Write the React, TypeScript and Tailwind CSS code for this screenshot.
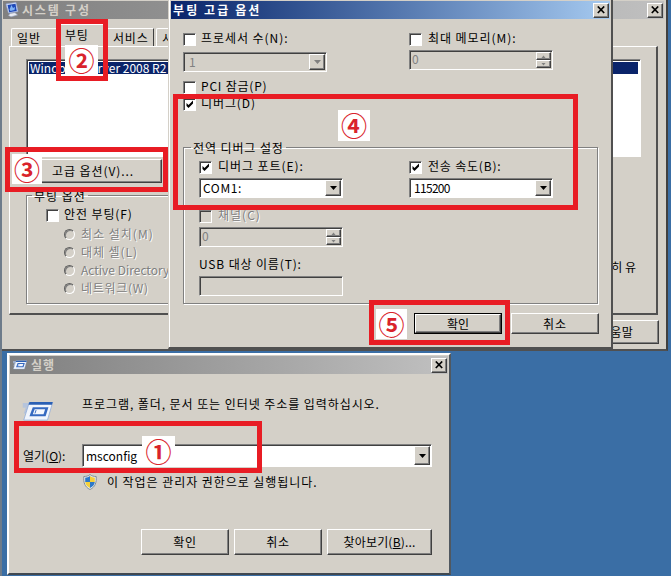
import type { ReactNode } from "react";

const RAISED =
  "bg-[#d4d0c8] border border-t-white border-l-white border-r-[#404040] border-b-[#404040] shadow-[inset_-1px_-1px_0_#808080]";
const SUNKEN =
  "border border-t-[#808080] border-l-[#808080] border-r-white border-b-white shadow-[inset_1px_1px_0_#404040]";
const DISABLED = "text-[#808080] [text-shadow:1px_1px_0_#fff]";

function CloseButton() {
  return (
    <div className={`flex h-[15px] w-4 shrink-0 items-center justify-center ${RAISED}`}>
      <svg width="9" height="8" viewBox="0 0 9 8" className="block">
        <path d="M0.8 0.5L7.2 7M7.2 0.5L0.8 7" stroke="#000" strokeWidth="1.7" />
      </svg>
    </div>
  );
}

function Button({ className, children }: { className: string; children: ReactNode }) {
  return (
    <div className={`flex shrink-0 items-center justify-center whitespace-nowrap ${RAISED} ${className}`}>
      {children}
    </div>
  );
}

function Check({ checked, disabled }: { checked?: boolean; disabled?: boolean }) {
  return (
    <div
      className={`flex h-[13px] w-[13px] shrink-0 items-center justify-center ${SUNKEN} ${
        disabled ? "bg-[#d4d0c8]" : "bg-white"
      }`}
    >
      {checked && (
        <svg width="9" height="9" viewBox="0 0 9 9" className="block">
          <path d="M1.5 3v3l2 2 4.500-4.500v-3L3.500 5z" fill="#000" />
        </svg>
      )}
    </div>
  );
}

function CheckRow({
  checked,
  disabled,
  gap = "gap-[5px]",
  className = "",
  children,
}: {
  checked?: boolean;
  disabled?: boolean;
  gap?: string;
  className?: string;
  children: ReactNode;
}) {
  return (
    <div className={`flex h-[13px] items-center whitespace-nowrap ${gap} ${className}`}>
      <Check checked={checked} disabled={disabled} />
      <span className={`-mt-[3px] ${disabled ? DISABLED : ""}`}>{children}</span>
    </div>
  );
}

function Combo({
  value,
  disabled,
  className,
  textClass = "pl-1",
}: {
  value: string;
  disabled?: boolean;
  className: string;
  textClass?: string;
}) {
  return (
    <div className={`flex p-px ${SUNKEN} ${disabled ? "bg-[#d4d0c8] text-[#808080]" : "bg-white"} ${className}`}>
      <span className={`flex flex-1 items-center ${textClass}`}>{value}</span>
      <div className={`flex w-4 items-center justify-center ${RAISED}`}>
        <svg width="7" height="4" viewBox="0 0 7 4" className="block">
          <path d="M0 0h7L3.5 4z" fill={disabled ? "#808080" : "#000"} />
        </svg>
      </div>
    </div>
  );
}

function Spinner() {
  return (
    <div className={`flex h-5 w-36 bg-[#d4d0c8] p-px text-[#808080] ${SUNKEN}`}>
      <span className="flex-1 pl-px leading-[13px]">0</span>
      <div className="flex w-[15px] flex-col">
        <div className={`flex flex-1 items-center justify-center ${RAISED}`}>
          <svg width="5" height="3" viewBox="0 0 5 3" className="block">
            <path d="M0.5 3h4L2.5 0.5z" fill="#808080" />
          </svg>
        </div>
        <div className={`flex flex-1 items-center justify-center ${RAISED}`}>
          <svg width="5" height="3" viewBox="0 0 5 3" className="block">
            <path d="M0.5 0h4L2.5 2.5z" fill="#808080" />
          </svg>
        </div>
      </div>
    </div>
  );
}

function Radio({ children, className = "" }: { children: ReactNode; className?: string }) {
  return (
    <div className="flex h-[18px] items-center gap-[6px] whitespace-nowrap">
      <div className="h-[11px] w-[11px] shrink-0 rounded-full border border-t-[#606060] border-l-[#606060] border-r-white border-b-white shadow-[inset_1px_1px_0_#808080]" />
      <span className={`-mt-px ${DISABLED} ${className}`}>{children}</span>
    </div>
  );
}

function MonitorIcon() {
  return (
    <svg width="14" height="16" viewBox="0 0 14 16" className="block shrink-0">
      <path d="M1 2l10-1.500 2 9-9.500 1.500z" fill="#dfe6f5" stroke="#8fa5d8" strokeWidth="0.7" />
      <path d="M2.500 3l8-1.200 1.300 7.200-7.600 1.200z" fill="#1d48b8" />
      <path d="M4.500 7.500l2-4.500 1.500 3 2-1-.5 3-4 1z" fill="#7fb2f4" />
      <path d="M5 11.500l5-.8 2.500 2.300-6.500 1.800-2.500-1.300z" fill="#e8ebf2" stroke="#9aa7c4" strokeWidth="0.6" />
    </svg>
  );
}

function RunIcon({ className }: { className: string }) {
  return (
    <svg viewBox="0 0 32 20" className={`block shrink-0 ${className}`}>
      <path d="M0 1h10L6 12H1l2-6H0z" fill="#a9bfe2" opacity="0.7" />
      <path d="M7 0h24.500L26 19H1z" fill="#f1f5fc" stroke="#8eabd9" strokeWidth="0.8" />
      <path d="M7 0h24.500l-.8 3H6z" fill="#2a5fb4" />
      <path d="M10.500 5.500h16.500l-3 9.500H7z" fill="#3569c0" />
      <path d="M12.500 7.500h11l-1.700 5.500H10.500z" fill="#f4f7fd" />
      <path d="M14 8.500l-1.200 3.500" stroke="#3569c0" strokeWidth="1" />
    </svg>
  );
}

function ShieldIcon() {
  return (
    <svg width="14" height="16" viewBox="0 0 14 16" className="block shrink-0">
      <path d="M7 .5C5.500 2 3 2.500.8 2.500.4 8 1.500 13 7 15.500 12.500 13 13.600 8 13.200 2.500 11 2.500 8.500 2 7 .5z" fill="#e8edf0" stroke="#77848f" strokeWidth="0.9" />
      <path d="M7 2C5.500 3.200 4 3.600 2.200 3.700V8H7z" fill="#2d78c8" />
      <path d="M7 2c1.500 1.200 3 1.600 4.800 1.700V8H7z" fill="#f4d03a" />
      <path d="M2.200 8H7v6C4 12.500 2.500 10.500 2.200 8z" fill="#f4d03a" />
      <path d="M11.800 8H7v6c3-1.500 4.500-3.500 4.800-6z" fill="#2d78c8" />
    </svg>
  );
}

function Mark({ box, badge, n }: { box: string; badge: string; n: string }) {
  return (
    <>
      <div className={`absolute border-[5px] border-[#e81c24] ${box}`} />
      <div
        className={`absolute flex items-center justify-center bg-white pb-px text-[26px] leading-none font-bold text-[#d9232b] ${badge}`}
      >
        {n}
      </div>
    </>
  );
}

function ConfigWindow() {
  return (
    <div className="absolute top-0 left-0 flex h-[351px] w-[668px] flex-col border-r-2 border-b-2 border-l-2 border-r-[#404040] border-b-[#505050] border-l-[#808080] bg-[#d4d0c8] pt-px pr-[2px] pl-px">
      <div className="flex h-[18px] shrink-0 items-center bg-linear-to-r from-[#808080] to-[#c0c0c0] pr-px pl-[2px]">
        <MonitorIcon />
        <span className="ml-[3px] flex-1 text-[12px] font-bold tracking-[1.8px] text-[#d4d0c8]">시스템 구성</span>
        <CloseButton />
      </div>
      <div className="ml-2 flex h-[27px] shrink-0 items-end">
        <div className="flex h-[18px] w-[46px] items-center rounded-tl-[2px] border-t border-l border-white pl-[5px] tracking-[1px]">
          일반
        </div>
        <div className="flex h-[22px] w-[51px] items-start border-t border-l border-white pt-[3px] pl-[7px] tracking-[0.6px]">
          부팅
        </div>
        <div className="flex h-[18px] w-[46px] items-center border-t border-r border-t-white border-r-[#404040] pl-[5px] tracking-[0.8px]">
          서비스
        </div>
        <div className="ml-[2px] flex h-[18px] w-20 items-center rounded-tl-[2px] border-t border-l border-white pl-[5px]">
          시작
        </div>
      </div>
      <div className="ml-[6px] flex h-[269px] w-[649px] shrink-0 flex-col border border-t-white border-r-2 border-b-2 border-l-white border-r-[#505050] border-b-[#505050] pt-[12px] pl-4">
        <div className={`h-[98px] w-[615px] shrink-0 bg-white p-[2px] ${SUNKEN}`}>
          <div className="flex h-3 items-center bg-[#0a246a] pl-px whitespace-nowrap text-white">
            Windows Server 2008 R2
          </div>
        </div>
        <Button className="mt-[2px] ml-[14px] h-6 w-[122px] pr-[16px] tracking-[0.9px]">고급 옵션(V)...</Button>
        <div className="flex">
          <fieldset className="mt-[5px] h-[116px] w-[560px] shrink-0 border border-[#808080] pl-[19px] shadow-[1px_1px_0_#fff,inset_1px_1px_0_#fff]">
            <legend className="-ml-[14px] px-[2px] leading-[15px] tracking-[1px]">부팅 옵션</legend>
            <CheckRow className="mt-[6px] tracking-[0.9px]">안전 부팅(F)</CheckRow>
            <div className="mt-[3px] ml-[18px] flex flex-col">
              <Radio className="tracking-[1px]">최소 설치(M)</Radio>
              <Radio className="tracking-[0.95px]">대체 셸(L)</Radio>
              <Radio>Active Directory 복구(E)</Radio>
              <Radio className="tracking-[0.7px]">네트워크(W)</Radio>
            </div>
          </fieldset>
          <div className="mt-[77px] w-[50px] text-right whitespace-nowrap">히 유</div>
        </div>
      </div>
      <Button className="mt-[5px] mr-[5px] ml-auto h-[24px] w-[86px] tracking-[0.6px]">도움말</Button>
    </div>
  );
}

function AdvancedDialog() {
  return (
    <div className="absolute top-0 left-[168px] flex h-[349px] w-[445px] flex-col border-r-2 border-b-2 border-l border-r-[#505050] border-b-[#505050] border-l-[#d4d0c8] bg-[#d4d0c8] pt-px pr-px shadow-[inset_1px_0_0_#fff]">
      <div className="ml-[2px] flex h-[18px] shrink-0 items-center bg-linear-to-r from-[#0a246a] to-[#a6caf0] pr-px pl-[2px]">
        <span className="flex-1 text-[12px] font-bold tracking-[2.1px] text-white">부팅 고급 옵션</span>
        <CloseButton />
      </div>
      <div className="ml-[14px] flex h-[62px] shrink-0 gap-[82px] pt-[14px]">
        <div className="w-36">
          <CheckRow className="tracking-[0.95px]">프로세서 수(N):</CheckRow>
          <Combo value="1" disabled className="mt-[6px] h-5 w-36" />
        </div>
        <div className="w-36">
          <CheckRow gap="gap-[6px]" className="tracking-[0.95px]">
            최대 메모리(M):
          </CheckRow>
          <div className="mt-1">
            <Spinner />
          </div>
        </div>
      </div>
      <div className="ml-[14px] flex shrink-0 flex-col gap-1">
        <CheckRow className="tracking-[0.8px]">PCI 잠금(P)</CheckRow>
        <CheckRow checked className="tracking-[0.9px]">
          디버그(D)
        </CheckRow>
      </div>
      <fieldset className="mt-[29px] ml-[14px] h-[164px] w-[415px] shrink-0 border border-[#808080] pl-[15px] shadow-[1px_1px_0_#fff,inset_1px_1px_0_#fff]">
        <legend className="-ml-[8px] px-[2px] leading-[15px] tracking-[0.9px]">전역 디버그 설정</legend>
        <div className="flex gap-[66px] pt-[6px]">
          <div>
            <CheckRow checked gap="gap-[6px]" className="tracking-[0.95px]">
              디버그 포트(E):
            </CheckRow>
            <Combo value="COM1:" className="mt-[4px] h-5 w-36" textClass="pl-[2px] tracking-[0.6px]" />
          </div>
          <div>
            <CheckRow checked gap="gap-[6px]" className="tracking-[0.8px]">
              전송 속도(B):
            </CheckRow>
            <Combo value="115200" className="mt-[4px] h-5 w-36" textClass="pl-[3px] tracking-[-0.7px]" />
          </div>
        </div>
        <CheckRow disabled gap="gap-[6px]" className="mt-[12px] tracking-[1px]">
          채널(C)
        </CheckRow>
        <div className="mt-[4px]">
          <Spinner />
        </div>
        <div className="mt-[9px] h-[18px] leading-[16px] tracking-[0.85px]">USB 대상 이름(T):</div>
        <div className={`mt-[2px] h-5 w-36 ${SUNKEN}`} />
      </fieldset>
      <div className="mt-[9px] ml-[245px] flex gap-[9px]">
        <div className="border border-black">
          <Button className="h-[19px] w-[86px]">확인</Button>
        </div>
        <Button className="h-[21px] w-[88px] tracking-[1px]">취소</Button>
      </div>
    </div>
  );
}

function RunWindow() {
  return (
    <div className="absolute top-[353px] left-[7px] flex h-[222px] w-[444px] flex-col border-t-2 border-r-2 border-b-2 border-l-2 border-t-white border-r-[#505860] border-b-[#404850] border-l-white bg-[#d4d0c8] p-px">
      <div className="flex h-[18px] shrink-0 items-center bg-linear-to-r from-[#808080] to-[#c0c0c0] pr-px pl-[3px]">
        <RunIcon className="h-[10px] w-[14px]" />
        <span className="ml-1 flex-1 text-[12px] font-bold tracking-[1px] text-[#d4d0c8]">실행</span>
        <CloseButton />
      </div>
      <div className="mt-[21px] ml-3 flex h-[26px] items-start">
        <RunIcon className="mt-[7px] h-[19px] w-8" />
        <span className="ml-[28px] leading-[18px] tracking-[0.93px] whitespace-nowrap">
          프로그램, 폴더, 문서 또는 인터넷 주소를 입력하십시오.
        </span>
      </div>
      <div className="mt-[23px] ml-[13px] flex items-center">
        <span className="w-[59px]">
          열기(<u>O</u>):
        </span>
        <Combo value="msconfig" className="h-[23px] w-[350px]" textClass="pl-[2px] text-[12px]" />
      </div>
      <div className="mt-[7px] ml-[73px] flex h-4 items-center gap-[10px]">
        <ShieldIcon />
        <span className="tracking-[0.94px] whitespace-nowrap">이 작업은 관리자 권한으로 실행됩니다.</span>
      </div>
      <div className="mt-[39px] ml-[131px] flex gap-[5px]">
        <Button className="h-[26px] w-[88px] tracking-[0.6px]">확인</Button>
        <Button className="h-[26px] w-[88px] tracking-[0.6px]">취소</Button>
        <Button className="h-[26px] w-[105px]">
          <span className="tracking-[0.2px]">
            찾아보기(<u>B</u>)...
          </span>
        </Button>
      </div>
    </div>
  );
}

export default function App() {
  return (
    <div className="relative h-[576px] w-[671px] overflow-hidden border-l-2 border-[#6d7b8a] bg-[#3a6ea5] text-[12px] leading-[14px] text-black [font-family:'Noto_Sans_CJK_KR',sans-serif]">
      <div className="absolute top-0 -left-[2px] h-[576px] w-[671px]">
        <ConfigWindow />
        <Mark box="left-[56px] top-[19px] h-[62px] w-[52px]" badge="left-[65px] top-[45px] h-[31px] w-[33px]" n="②" />
        <Mark box="left-[5px] top-[147px] h-[45px] w-[163px]" badge="left-[12px] top-[154px] h-[30px] w-[30px]" n="③" />
        <AdvancedDialog />
        <Mark box="left-[173px] top-[94px] h-[116px] w-[405px]" badge="left-[338px] top-[110px] h-[31px] w-[32px]" n="④" />
        <Mark box="left-[369px] top-[300px] h-[45px] w-[141px]" badge="left-[376px] top-[309px] h-[30px] w-[31px]" n="⑤" />
        <RunWindow />
        <Mark box="left-[14px] top-[421px] h-[52px] w-[248px]" badge="left-[142px] top-[436px] h-[31px] w-[33px]" n="①" />
      </div>
    </div>
  );
}
